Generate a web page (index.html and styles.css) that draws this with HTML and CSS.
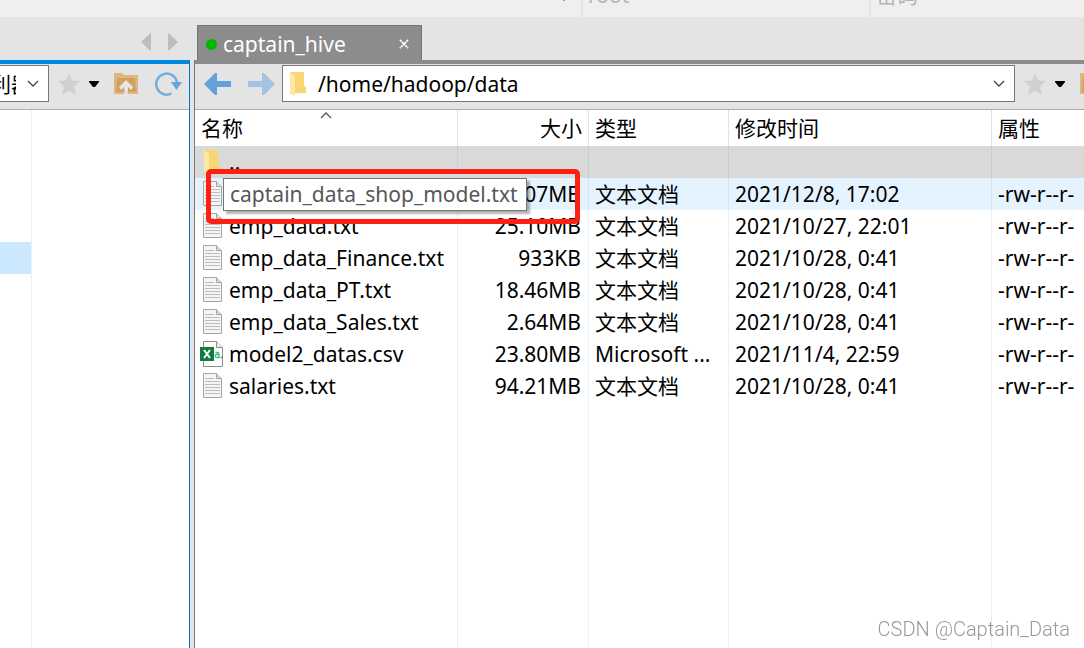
FILE: index.html
```html
<!DOCTYPE html>
<html lang="zh-CN">
<head>
<meta charset="utf-8">
<title>captain_hive</title>
<link rel="stylesheet" href="styles.css">
</head>
<body>
<svg class="defs" aria-hidden="true">
  <symbol id="star" viewBox="0 0 24 24"><path d="M12 1l3 7.500 8 .5-6 5.500 2 8.500-7-4.500L5 23l2-8.500L1 9l8-.5z" fill="#d0d0d0"/></symbol>
  <symbol id="chevron" viewBox="0 0 12 8"><path d="M1 1l5 5 5-5" fill="none" stroke="#444" stroke-width="1.300"/></symbol>
  <symbol id="caret" viewBox="0 0 10 6"><path d="M0 0h10v1L6 6H4L0 1z" fill="#000"/></symbol>
  <symbol id="up" viewBox="0 0 26 24"><path d="M1 1h8l2 2h14v19H1z" fill="#e0b67c"/><path d="M4 6h18l1 14H3z" fill="#d1a064"/><path d="M13 8l7 7-2 3-3-3q0 6-1 9h-3q1-4 0-9l-3 3-2-3z" fill="#e8e6e2"/></symbol>
  <symbol id="folder" viewBox="0 0 17 24"><path d="M2 0h13v14l2 1v6H5z" fill="#f7d774"/><path d="M1 0l5 4v20l-5-2z" fill="#ffe8a6"/></symbol>
  <symbol id="doc" viewBox="0 0 20 26"><path d="M.5.5h13l5 5v19H.5z" fill="#f5f5f5" stroke="#a4a4a4"/><path d="M13.500.5v5h5" fill="#ddd" stroke="#a4a4a4"/><path d="M2 5.500h9M2 8.500h15M2 11.500h15M2 14.500h15M2 17.500h15M2 20.500h15" stroke="#bcbcbc"/></symbol>
  <symbol id="csv" viewBox="0 0 24 26"><path d="M3.500.5h13l6 6v19h-19z" fill="#fff" stroke="#8c8c8c"/><path d="M16.500.5v6h6" fill="#eee" stroke="#8c8c8c"/><path d="M0 6h14v14H0z" fill="#107c41"/><path d="M4 9l6 8M10 9l-6 8" stroke="#fff" stroke-width="2"/><path d="M15.500 11.500h2q1.500 0 1.500 1.500v3.500h-2.200a1.300 1.300 0 010-3H19M21 17.500l.5-2" fill="none" stroke="#43b97f" stroke-width="1.300"/></symbol>
</svg>

<header class="login-bar">
  <div class="field host"><svg class="chevron"><use href="#chevron"/></svg></div>
  <input class="field user" placeholder="root" aria-label="root">
  <input class="field password" placeholder="密码" aria-label="密码">
</header>

<main class="panes">
  <section class="pane local">
    <div class="tab-bar scroller">
      <button class="plain" aria-label="向左"><svg width="10" height="18" viewBox="0 0 10 18"><path d="M0 9l9-8.500h1v17H9z" fill="#bdbdbd"/></svg></button>
      <button class="plain" aria-label="向右"><svg width="10" height="18" viewBox="0 0 10 18"><path d="M10 9L1 .5H0v17h1z" fill="#bdbdbd"/></svg></button>
    </div>
    <div class="frame">
      <div class="toolbar">
        <button class="combo local-combo"><span class="clip"><span>利器</span></span><svg class="chevron"><use href="#chevron"/></svg></button>
        <button class="plain favorite" aria-label="收藏"><svg class="icon"><use href="#star"/></svg><svg class="caret"><use href="#caret"/></svg></button>
        <button class="plain" aria-label="上级"><svg class="up-icon"><use href="#up"/></svg></button>
        <button class="plain refresh" aria-label="刷新"><svg width="28" height="26" viewBox="0 0 28 26"><path d="M17.500 22.500A10.500 10.500 0 1 1 23 11" fill="none" stroke="#75addb" stroke-width="2.500"/><path d="M17 11h11l-5.500 8z" fill="#66a3d6"/></svg></button>
      </div>
      <div class="local-list"><div class="local-column"><div class="local-selected"></div></div></div>
    </div>
  </section>

  <section class="pane remote">
    <div class="tab-bar">
      <div class="tab"><span class="status"></span><span class="tab-name">captain_hive</span>
        <button class="plain" aria-label="关闭"><svg width="10" height="10" viewBox="0 0 10 10"><path d="M1 1l8 8M9 1L1 9" stroke="#fff" stroke-width="1.800" stroke-dasharray="2 .6"/></svg></button>
      </div>
    </div>
    <div class="frame">
      <div class="toolbar">
        <button class="plain" aria-label="后退"><svg width="28" height="22" viewBox="0 0 28 22"><path d="M0 11L11 0h2v8h14v6H13v8h-2z" fill="#64a1d8"/></svg></button>
        <button class="plain forward" aria-label="前进"><svg width="28" height="22" viewBox="0 0 28 22"><path d="M28 11L17 0h-2v8H1v6h14v8h2z" fill="#a3c4e0"/></svg></button>
        <div class="combo path"><svg class="folder"><use href="#folder"/></svg><input value="/home/hadoop/data" aria-label="路径"><svg class="chevron"><use href="#chevron"/></svg></div>
        <button class="plain favorite" aria-label="收藏"><svg class="icon"><use href="#star"/></svg><svg class="caret"><use href="#caret"/></svg></button>
        <button class="plain" aria-label="上级"><svg class="up-icon"><use href="#up"/></svg></button>
      </div>
      <div class="listing">
        <table class="files">
          <colgroup><col class="c-name"><col class="c-size"><col class="c-type"><col class="c-time"><col></colgroup>
          <thead><tr><th>名称<svg class="sort" viewBox="0 0 12 8"><path d="M1 7l5-5 5 5" fill="none" stroke="#555" stroke-width="1.300"/></svg></th><th class="size">大小</th><th>类型</th><th>修改时间</th><th>属性</th></tr></thead>
          <tbody>
            <tr class="parent"><td><span class="name"><svg class="folder"><use href="#folder"/></svg>..</span></td><td></td><td></td><td></td><td></td></tr>
            <tr class="hover"><td><span class="name"><svg class="doc"><use href="#doc"/></svg></span></td><td class="size">07MB</td><td>文本文档</td><td>2021/12/8, 17:02</td><td>-rw-r--r-</td></tr>
            <tr><td><span class="name"><svg class="doc"><use href="#doc"/></svg>emp_data.txt</span></td><td class="size">25.10MB</td><td>文本文档</td><td>2021/10/27, 22:01</td><td>-rw-r--r-</td></tr>
            <tr><td><span class="name"><svg class="doc"><use href="#doc"/></svg>emp_data_Finance.txt</span></td><td class="size">933KB</td><td>文本文档</td><td>2021/10/28, 0:41</td><td>-rw-r--r-</td></tr>
            <tr><td><span class="name"><svg class="doc"><use href="#doc"/></svg>emp_data_PT.txt</span></td><td class="size">18.46MB</td><td>文本文档</td><td>2021/10/28, 0:41</td><td>-rw-r--r-</td></tr>
            <tr><td><span class="name"><svg class="doc"><use href="#doc"/></svg>emp_data_Sales.txt</span></td><td class="size">2.64MB</td><td>文本文档</td><td>2021/10/28, 0:41</td><td>-rw-r--r-</td></tr>
            <tr><td><span class="name"><svg class="csv"><use href="#csv"/></svg>model2_datas.csv</span></td><td class="size">23.80MB</td><td>Microsoft ...</td><td>2021/11/4, 22:59</td><td>-rw-r--r-</td></tr>
            <tr><td><span class="name"><svg class="doc"><use href="#doc"/></svg>salaries.txt</span></td><td class="size">94.21MB</td><td>文本文档</td><td>2021/10/28, 0:41</td><td>-rw-r--r-</td></tr>
            <tr class="filler"><td></td><td></td><td></td><td></td><td></td></tr>
          </tbody>
        </table>
        <div class="marker"></div>
        <div class="tooltip" role="tooltip">captain_data_shop_model.txt</div>
      </div>
    </div>
  </section>
</main>
<div class="watermark">CSDN @Captain_Data</div>
</body>
</html>
```
FILE: styles.css
```css
* { box-sizing: border-box; }
body {
  margin: 0;
  height: 100vh;
  display: flex;
  flex-direction: column;
  overflow: hidden;
  background: #e4e4e4;
  color: #000;
  font: 21px/32px "Noto Sans", "Noto Sans CJK SC", sans-serif;
}
svg { display: block; flex: none; }
input, button { font: inherit; color: inherit; }
.defs { position: absolute; width: 0; height: 0; }
.plain { display: flex; align-items: center; flex: none; padding: 0; border: 0; background: none; }
.chevron { width: 12px; height: 8px; }
.caret { width: 10px; height: 6px; }
.icon { width: 24px; height: 24px; }
.up-icon { width: 26px; height: 24px; }
.folder { width: 17px; height: 24px; }

.login-bar { display: flex; align-items: flex-end; height: 17px; flex: none; overflow: hidden; background: #efefef; }
.field { flex: none; height: 36px; padding: 0 5px 8px; border: 0; border-right: 2px solid #e4e4e4; border-radius: 0; background: none; line-height: 24px; }
.field::placeholder { color: #b4b4b4; opacity: 1; }
.host { display: flex; justify-content: flex-end; align-items: flex-end; width: 583px; padding: 0 11px 15px; }
.user { width: 288px; }
.password { flex: 1; min-width: 0; border-right: 0; }

.panes { flex: 1; min-height: 0; display: flex; gap: 4px; }
.pane { display: flex; flex-direction: column; min-width: 0; min-height: 0; }
.local { width: 190px; flex: none; }
.remote { flex: 1; }
.tab-bar { height: 43px; flex: none; display: flex; align-items: flex-end; }
.scroller { justify-content: flex-end; align-items: center; gap: 17px; padding: 7px 12px 0 0; }
.frame { flex: 1; min-height: 0; display: flex; flex-direction: column; overflow: hidden; }
.local .frame { border-top: 4px solid #0088e0; border-right: 1px solid #0078c8; }
.remote .frame { border-top: 4px solid #8b8b8b; border-left: 1px solid #777; }
.tab { display: flex; align-items: center; width: 225px; height: 35px; margin-left: 3px; padding: 2px 12px 0 8px; border: 1px solid #757575; border-bottom: 0; background: #8c8c8c; color: #fff; }
.status { width: 11px; height: 11px; margin-right: 6px; border-radius: 50%; background: #00b800; }
.tab-name { flex: 1; }

.toolbar { display: flex; align-items: center; height: 46px; flex: none; padding-bottom: 6px; border-bottom: 1px solid #adadad; }
.combo { display: flex; align-items: center; height: 37px; border: 1px solid #777; background: #fff; }
.local-combo { width: 49px; flex: none; padding: 0 9px 0 0; border-left: 0; justify-content: space-between; }
.clip { display: flex; justify-content: flex-end; width: 16px; overflow: hidden; }
.clip span { margin-right: -16px; white-space: nowrap; }
.favorite { gap: 8px; margin: 0 14px 0 8px; }
.refresh { margin-left: 15px; }
/* The toolbar runs past the window edge, which clips its last button. */
.remote .toolbar { margin-right: -21px; padding-left: 9px; }
.forward { margin: 0 7px 0 15px; }
.path { flex: 1; min-width: 0; padding: 0 9px 0 6px; gap: 12px; }
.path input { flex: 1; min-width: 0; padding: 0; border: 0; outline: 0; background: none; }

.local-list { flex: 1; background: #fff; }
.local-column { width: 32px; height: 100%; padding-top: 132px; border-right: 1px solid #e5f1fb; }
.local-selected { height: 32px; background: #cce8ff; }

.listing { position: relative; flex: 1; min-height: 0; background: #fff; }
.files { width: 100%; height: 100%; table-layout: fixed; border-collapse: separate; border-spacing: 0; }
.c-name { width: 263px; }
.c-size { width: 131px; }
.c-type { width: 140px; }
.c-time { width: 263px; }
th, td { height: 32px; padding: 0 6px; border-right: 1px solid #e5f1fb; overflow: hidden; white-space: nowrap; text-align: left; font-weight: 400; line-height: 32px; }
th { position: relative; height: 36px; border-right-color: #e2e2e2; line-height: 36px; }
th:last-child, td:last-child { border-right: 0; }
.sort { position: absolute; left: calc(50% - 6px); top: 1px; width: 12px; height: 8px; }
td.size { padding-right: 7px; }
.size { text-align: right; }
.parent td { background: #d9d9d9; border-right-color: #c4d0d9; }
.hover td { background: #e5f3ff; border-right-color: #cfe7fa; }
.filler td { height: auto; }
.name { display: flex; align-items: center; height: 32px; padding-left: 2px; gap: 6px; }
.name .folder { margin-right: 3px; }
.doc { width: 20px; height: 26px; }
.csv { width: 24px; height: 26px; margin: 0 -1px 0 -3px; }
.marker { position: absolute; left: 11px; top: 59px; width: 374px; height: 55px; border: 5px solid #ff2012; border-radius: 5px; }
.tooltip { position: absolute; left: 28px; top: 68px; padding: 0 8px 0 6px; border: 1px solid #767676; background: #fff; box-shadow: 3px 3px 2px rgba(0, 0, 0, .3); color: #575757; line-height: 31px; white-space: nowrap; }

.watermark { position: fixed; right: 14px; bottom: 7px; color: #999; font: 300 20px/24px Roboto, sans-serif; }
```
